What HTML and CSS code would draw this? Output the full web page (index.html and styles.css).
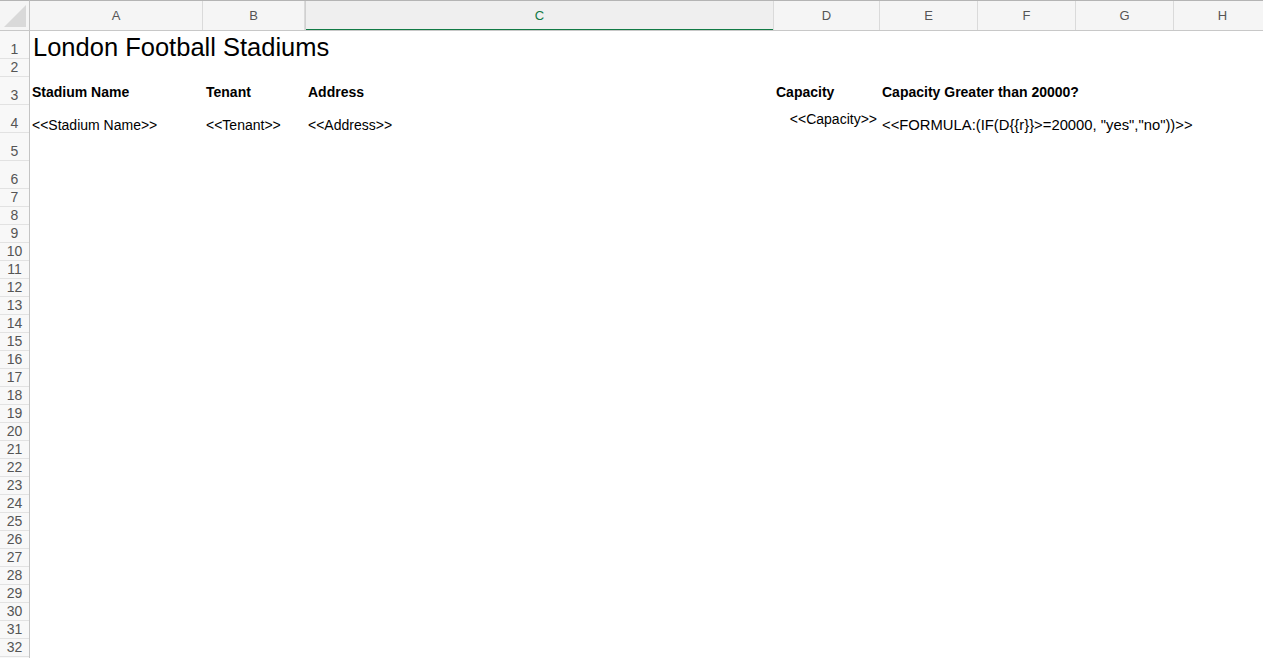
FILE: index.html
```html
<!DOCTYPE html>
<html>
<head>
<meta charset="utf-8">
<title>London Football Stadiums</title>
<link rel="stylesheet" href="styles.css">
</head>
<body>
<div class="sheet">
  <div class="corner">
    <svg class="corner-tri" width="29" height="30" viewBox="0 0 29 30"><polygon points="4,27 26,5 26,27" fill="#d9d9d9"/></svg>
  </div>
  <div class="colheads">
    <div class="ch col-a">A</div>
    <div class="ch col-b">B</div>
    <div class="ch col-c sel">C</div>
    <div class="ch col-d">D</div>
    <div class="ch col-e">E</div>
    <div class="ch col-f">F</div>
    <div class="ch col-g">G</div>
    <div class="ch col-h">H</div>
  </div>
  <div class="rowheads">
    <div class="rh tall">1</div>
    <div class="rh">2</div>
    <div class="rh tall">3</div>
    <div class="rh tall">4</div>
    <div class="rh tall">5</div>
    <div class="rh tall">6</div>
    <div class="rh">7</div>
    <div class="rh">8</div>
    <div class="rh">9</div>
    <div class="rh">10</div>
    <div class="rh">11</div>
    <div class="rh">12</div>
    <div class="rh">13</div>
    <div class="rh">14</div>
    <div class="rh">15</div>
    <div class="rh">16</div>
    <div class="rh">17</div>
    <div class="rh">18</div>
    <div class="rh">19</div>
    <div class="rh">20</div>
    <div class="rh">21</div>
    <div class="rh">22</div>
    <div class="rh">23</div>
    <div class="rh">24</div>
    <div class="rh">25</div>
    <div class="rh">26</div>
    <div class="rh">27</div>
    <div class="rh">28</div>
    <div class="rh">29</div>
    <div class="rh">30</div>
    <div class="rh">31</div>
    <div class="rh">32</div>
  </div>
  <div class="cells">
    <div class="row tall title-row">
      <div class="cell title">London Football Stadiums</div>
    </div>
    <div class="row"></div>
    <div class="row tall head-row">
      <div class="cell">Stadium Name</div>
      <div class="cell pad3">Tenant</div>
      <div class="cell pad3">Address</div>
      <div class="cell">Capacity</div>
      <div class="cell">Capacity Greater than 20000?</div>
    </div>
    <div class="row tall data-row">
      <div class="cell">&lt;&lt;Stadium Name&gt;&gt;</div>
      <div class="cell pad3">&lt;&lt;Tenant&gt;&gt;</div>
      <div class="cell pad3">&lt;&lt;Address&gt;&gt;</div>
      <div class="cell num">&lt;&lt;Capacity&gt;&gt;</div>
      <div class="cell formula">&lt;&lt;FORMULA:(IF(D{{r}}&gt;=20000, "yes","no"))&gt;&gt;</div>
    </div>
  </div>
</div>
</body>
</html>
```

FILE: styles.css
```css
html, body {
  margin: 0;
  padding: 0;
  background: #ffffff;
  overflow: hidden;
}

body {
  font-family: "Liberation Sans", Arial, sans-serif;
  color: #000;
}

.sheet {
  display: grid;
  grid-template-columns: 30px 1fr;
  grid-template-rows: 31px 1fr;
  width: 1263px;
  height: 658px;
  overflow: hidden;
}

.corner {
  box-sizing: border-box;
  border-top: 1px solid #b4b4b4;
  border-right: 1px solid #c4c4c4;
  border-bottom: 1px solid #c8c8c8;
  background: #f5f5f5;
}

.corner-tri {
  display: block;
  margin-top: -1px;
}

.colheads {
  display: flex;
  box-sizing: border-box;
  border-top: 1px solid #b4b4b4;
  border-bottom: 1px solid #c8c8c8;
  background: #f5f5f5;
  overflow: hidden;
}

.ch {
  flex: none;
  box-sizing: border-box;
  border-right: 1px solid #dadada;
  display: flex;
  align-items: center;
  justify-content: center;
  font-size: 13px;
  line-height: 16px;
  color: #555;
}

.ch.sel {
  background: #efefef;
  color: #117a45;
  box-shadow: inset 0 -2px 0 #117a45;
  border-left: 1px solid #d0d0d0;
  margin-bottom: -1px;
}

.col-a { width: 173px; }
.col-b { width: 102px; }
.col-c { width: 469px; }
.col-d { width: 106px; }
.col-e { width: 98px; }
.col-f { width: 98px; }
.col-g { width: 98px; }
.col-h { width: 98px; }

.rowheads {
  display: flex;
  flex-direction: column;
  box-sizing: border-box;
  border-right: 1px solid #c4c4c4;
  background: #f8f8f8;
}

.rh {
  flex: none;
  box-sizing: border-box;
  height: 18px;
  border-bottom: 1px solid #e2e2e2;
  display: flex;
  align-items: flex-end;
  justify-content: center;
  font-size: 14px;
  line-height: 16px;
  color: #555;
  padding-bottom: 1px;
}

.rh.tall {
  height: 28px;
}

.cells {
  display: flex;
  flex-direction: column;
}

.row {
  flex: none;
  height: 18px;
  display: grid;
  grid-template-columns: 173px 102px 469px 106px 98px 98px 98px 98px;
}

.row.tall {
  height: 28px;
}

.cell {
  white-space: nowrap;
  font-size: 14px;
  line-height: 16px;
  padding: 0 3px 0 2px;
  overflow: visible;
}

.cell.pad3 {
  padding-left: 3px;
}

.title-row {
  align-items: end;
}

.title {
  font-size: 25.5px;
  line-height: 25px;
  margin-bottom: -1px;
  padding-left: 3px;
  grid-column: 1 / span 3;
}

.head-row {
  align-items: center;
  padding-top: 2px;
  box-sizing: border-box;
}

.head-row .cell {
  font-weight: bold;
}

.data-row {
  align-items: end;
}

.cell.formula {
  font-size: 14.8px;
}

.cell.num {
  text-align: right;
  align-self: center;
}
```
